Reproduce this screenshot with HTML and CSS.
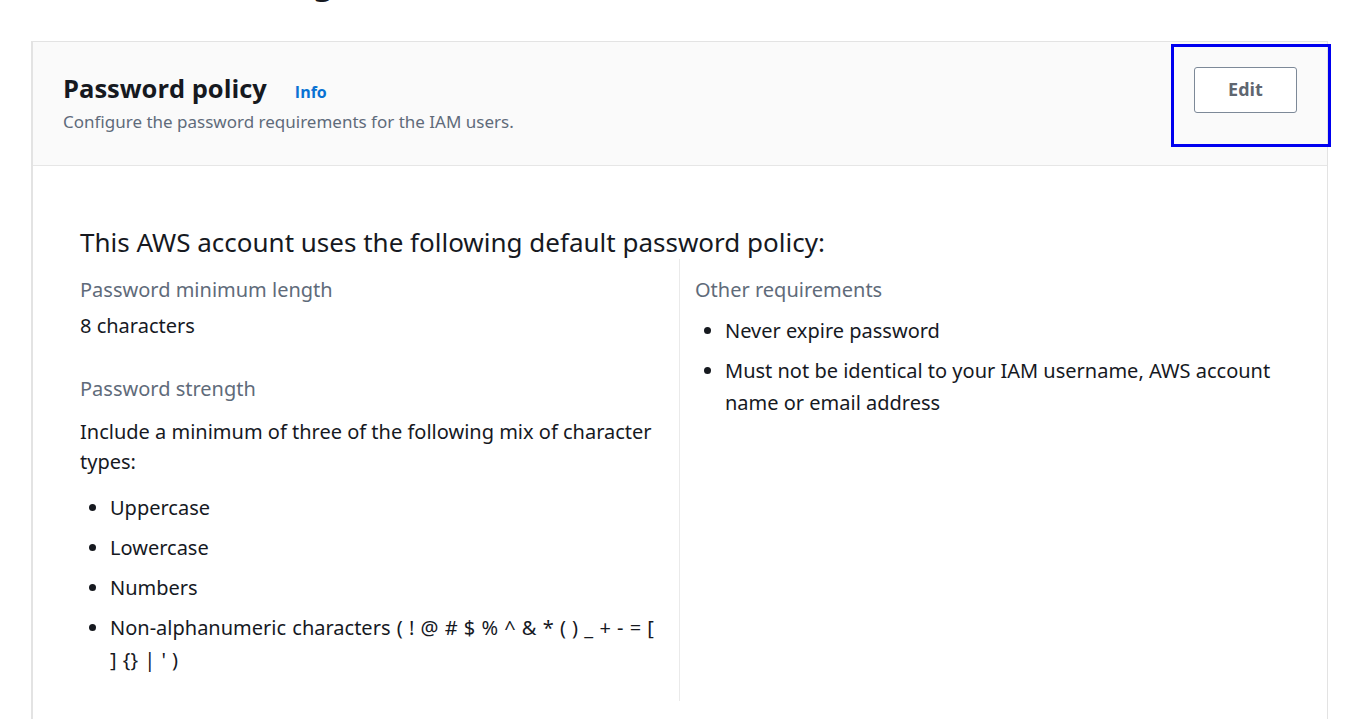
FILE: index.html
```html
<!DOCTYPE html>
<html lang="en">
<head>
<meta charset="utf-8">
<title>Password policy</title>
<link rel="stylesheet" href="styles.css">
</head>
<body>
<div class="page">
  <h1 class="page-title">Account settings</h1>
  <section class="card">
    <header class="card-header">
      <div class="header-text">
        <div class="title-row">
          <h2 class="card-title">Password policy</h2>
          <a class="info-link" href="#">Info</a>
        </div>
        <p class="card-desc">Configure the password requirements for the IAM users.</p>
      </div>
      <div class="actions">
        <button class="btn">Edit</button>
        <span class="highlight"></span>
      </div>
    </header>
    <div class="card-body">
      <h3 class="policy-title">This AWS account uses the following default password policy:</h3>
      <div class="columns">
        <div class="col col-left">
          <div class="field">
            <div class="label">Password minimum length</div>
            <div class="value">8 characters</div>
          </div>
          <div class="field">
            <div class="label">Password strength</div>
            <p class="value para">Include a minimum of three of the following mix of character types:</p>
            <ul class="list">
              <li>Uppercase</li>
              <li>Lowercase</li>
              <li>Numbers</li>
              <li class="symbols">Non-alphanumeric characters ( ! @ # $ % ^ &amp; * ( ) _ + - = [ ] {} | ' )</li>
            </ul>
          </div>
        </div>
        <div class="col col-right">
          <div class="label">Other requirements</div>
          <ul class="list list-right">
            <li>Never expire password</li>
            <li>Must not be identical to your IAM username, AWS account name or email address</li>
          </ul>
        </div>
      </div>
    </div>
  </section>
</div>
</body>
</html>
```
FILE: styles.css
```css
* { box-sizing: border-box; }
html, body { margin: 0; padding: 0; background: #ffffff; }
body {
  font-family: "Noto Sans", "Open Sans", Arial, sans-serif;
  color: #16191f;
  width: 1355px;
  height: 719px;
  overflow: hidden;
}
.page {
  padding-left: 31px;
  width: 1328px;
}
.page-title {
  margin: -38px 0 0 0;
  font-size: 32px;
  line-height: 40px;
  font-weight: 700;
  color: #16191f;
  height: 40px;
  text-indent: 50px;
}
.card {
  margin-top: 39px;
  border: 1px solid #e3e3e3;
  border-left-width: 2px;
  border-bottom: none;
  background: #fff;
}
.card-header {
  display: flex;
  justify-content: space-between;
  align-items: flex-start;
  background: #fafafa;
  border-bottom: 1px solid #e6e6e6;
  height: 124px;
  padding: 25px 30px 0 30px;
}
.title-row {
  display: flex;
  align-items: baseline;
  gap: 28px;
}
.card-title {
  margin: 0;
  font-family: "Open Sans", "Noto Sans", sans-serif;
  font-size: 25.5px;
  line-height: 42px;
  font-weight: 700;
  color: #16191f;
}
.info-link {
  font-family: "Open Sans", "Noto Sans", sans-serif;
  font-size: 16px;
  font-weight: 700;
  color: #0972d3;
  text-decoration: none;
}
.card-desc {
  margin: 1px 0 0 0;
  font-size: 17px;
  line-height: 24px;
  color: #5f6b7a;
}
.actions {
  position: relative;
}
.btn {
  width: 103px;
  height: 46px;
  background: #ffffff;
  border: 1px solid #7d8998;
  border-radius: 3px;
  font-family: "Open Sans", "Noto Sans", sans-serif;
  font-size: 18px;
  font-weight: 700;
  color: #5f6670;
  cursor: pointer;
  padding: 0 0 2px 0;
}
.highlight {
  position: absolute;
  left: -23px;
  top: -23px;
  width: 160px;
  height: 103px;
  border: 3px solid #0000f0;
  pointer-events: none;
}
.card-body {
  padding: 59px 33px 40px 47px;
}
.policy-title {
  margin: 0;
  font-size: 26px;
  line-height: 34px;
  font-weight: 400;
  color: #16191f;
}
.columns {
  display: grid;
  grid-template-columns: 600px 1fr;
}
.col {
  padding-top: 16px;
  padding-bottom: 25px;
}
.col-left {
  border-right: 1px solid #eaeaea;
  padding-right: 16px;
}
.col-right {
  padding-left: 15px;
}
.field + .field { margin-top: 33px; }
.label {
  font-size: 20px;
  line-height: 30px;
  color: #5f6b7a;
}
.value {
  margin: 6px 0 0 0;
  font-size: 20px;
  line-height: 30px;
  color: #16191f;
}
.para {
  margin-top: 13px;
}
.list {
  margin: 15px 0 0 0;
  padding-left: 30px;
  font-size: 20px;
  line-height: 32px;
  color: #16191f;
}
.list li { margin-top: 8px; }
.list li:first-child { margin-top: 0; }
.list .symbols { word-spacing: 1px; }
.list-right { margin-top: 10px; }
```
